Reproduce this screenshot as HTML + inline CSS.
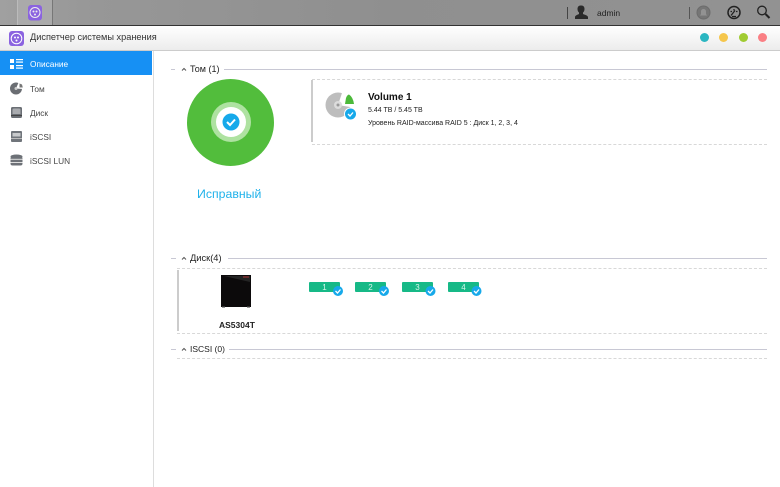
<!DOCTYPE html>
<html><head><meta charset="utf-8">
<style>
html,body{margin:0;padding:0;background:#fff}
#p{position:relative;width:780px;height:487px;overflow:hidden;background:#fff;font-family:"Liberation Sans",sans-serif;color:#222}
#p div,#p span{position:absolute;white-space:nowrap}
.nav{font-size:8.3px;left:30px;color:#444}
.ln{height:1px;background:#c8c8d4}
.sec{font-size:9px;color:#222}
.dot{height:0;border-top:1px dashed #d8d8d8}
.chip{width:31px;height:10px;background:#17b987;color:#d8f5ea;font-size:8px;line-height:11px;text-align:center;border-radius:1px}
.tb{width:9px;height:9px;border-radius:50%;top:33px}
svg{position:absolute;overflow:visible}
</style></head><body><div id="p">
<div style="left:0;top:0;width:780px;height:25px;background:linear-gradient(90deg,#a0a0a0,#979797 12%,#8f8f8f 50%,#929292)"></div>
<div style="left:17px;top:0;width:36px;height:25px;background:#aaa;border-left:1px solid #bbb;border-right:1px solid #777;box-sizing:border-box"></div>
<div style="left:0;top:25px;width:780px;height:1px;background:#333"></div>
<svg style="left:0;top:0" width="780" height="26">
<rect x="28" y="5" width="14" height="15.500" rx="3" fill="#8b63e0"/>
<circle cx="35" cy="12.500" r="5" fill="none" stroke="#eee" stroke-width="1"/><circle cx="33.500" cy="11.500" r="1" fill="#eee"/><circle cx="36.500" cy="11.500" r="1" fill="#eee"/><circle cx="35" cy="14.500" r="1" fill="#eee"/>
<rect x="567" y="7" width="1" height="12" fill="#444"/>
<path d="M575 19v-2c0-1.500 3-2.500 4-3v-1.500c-1-.8-1.500-2-1.500-3.500 0-2 1-3.500 3-3.500h1c2 0 3 1.500 3 3.500 0 1.500-.5 2.700-1.500 3.500V14c1 .5 5 1.500 5 3v2z" fill="#2a2a2a"/>
<rect x="689" y="7" width="1" height="12" fill="#555"/>
<circle cx="703.500" cy="12.500" r="6.500" fill="#767676" stroke="#6c6c6c"/>
<path d="M700 15.500h7l-1-1.500v-2.500c0-1.500-1-2.500-2.500-2.500s-2.500 1-2.500 2.500V14z" fill="#929292"/>
<circle cx="734" cy="12.500" r="6" fill="none" stroke="#222" stroke-width="1.500"/>
<path d="M731 15.500l4-5M730.500 11.500h1.500M734 9v1.500M737.500 11.500H736M732 16.500h4" stroke="#222" stroke-width="1.300" fill="none"/>
<circle cx="762" cy="10.500" r="4.300" fill="none" stroke="#222" stroke-width="1.300"/>
<path d="M765.500 14l4 4" stroke="#222" stroke-width="2"/>
</svg>
<div style="left:597px;top:8px;font-size:8.500px;color:#222">admin</div>

<div style="left:0;top:26px;width:780px;height:24px;background:linear-gradient(#fff,#ececec)"></div>
<div style="left:0;top:50px;width:780px;height:1px;background:#ccc"></div>
<svg style="left:0;top:0" width="60" height="50">
<rect x="9" y="31" width="15" height="15" rx="3" fill="#8b63e0"/>
<circle cx="16.500" cy="38.500" r="5.300" fill="none" stroke="#fff" stroke-width="1"/><circle cx="15" cy="37.500" r="1" fill="#fff"/><circle cx="18" cy="37.500" r="1" fill="#fff"/><circle cx="16.500" cy="40.500" r="1" fill="#fff"/>
</svg>
<div style="left:30px;top:32px;font-size:9.200px;color:#333">Диспетчер системы хранения</div>
<div class="tb" style="left:700px;background:#2bb6c1"></div>
<div class="tb" style="left:719px;background:#f5c64c"></div>
<div class="tb" style="left:739px;background:#a0cb32"></div>
<div class="tb" style="left:758px;background:#fa7f84"></div>

<div style="left:153px;top:51px;width:1px;height:436px;background:#ddd"></div>
<div style="left:0;top:51px;width:152px;height:24px;background:#1690f4"></div>
<div class="nav" style="top:59px;color:#fff">Описание</div>
<div class="nav" style="top:84px">Том</div>
<div class="nav" style="top:108px">Диск</div>
<div class="nav" style="top:132px">iSCSI</div>
<div class="nav" style="top:156px">iSCSI LUN</div>
<svg style="left:0;top:0" width="30" height="175">
<g fill="#fff"><rect x="10" y="59" width="4" height="4"/><rect x="10" y="65" width="4" height="4"/><rect x="16" y="59" width="7" height="1.200"/><rect x="16" y="61.500" width="7" height="1.200"/><rect x="16" y="65" width="7" height="1.200"/><rect x="16" y="67.500" width="7" height="1.200"/></g>
<circle cx="16" cy="88.500" r="6" fill="#6a6d72"/><path d="M16 88.500L19 81.500L24 84L23 89z" fill="#fff"/><circle cx="16" cy="88.500" r="1.500" fill="#ccc"/><path d="M19.500 83.500l2.500 1 .8 3h-3.300z" fill="#777"/>
<rect x="11" y="107" width="11" height="11" rx="1.500" fill="#6b6f75"/><path d="M12.500 114v-4a1.500 1.500 0 0 1 1.500-1.500h5a1.500 1.500 0 0 1 1.500 1.500v4z" fill="#a9abaf"/><rect x="11" y="115" width="11" height="1" fill="#444"/>
<rect x="11" y="131" width="11" height="11" rx="1" fill="#70757b"/><rect x="12.500" y="133" width="8" height="3.500" fill="#c8cacc"/><rect x="11" y="138" width="11" height="1" fill="#bbb"/>
<ellipse cx="16.500" cy="156.500" rx="6" ry="2" fill="#6d7177"/><rect x="10.500" y="156.500" width="12" height="9" rx="2" fill="#6d7177"/><rect x="10.500" y="158.800" width="12" height="1" fill="#ddd"/><rect x="10.500" y="162" width="12" height="1" fill="#ddd"/>
</svg>

<div class="ln" style="left:171px;top:69px;width:4px"></div>
<div class="ln" style="left:224px;top:69px;width:543px"></div>
<div class="sec" style="left:190px;top:64px">Том (1)</div>
<div class="ln" style="left:171px;top:258px;width:5px"></div>
<div class="ln" style="left:228px;top:258px;width:539px"></div>
<div class="sec" style="left:190px;top:253px;font-size:9.300px">Диск(4)</div>
<div class="ln" style="left:171px;top:349px;width:5px"></div>
<div class="ln" style="left:229px;top:349px;width:538px"></div>
<div class="sec" style="left:190px;top:344px;font-size:8.500px">ISCSI (0)</div>
<svg style="left:0;top:0" width="200" height="360" fill="none" stroke="#555" stroke-width="1">
<path d="M182 70.500l2-2 2 2M182 259.500l2-2 2 2M182 350.500l2-2 2 2"/></svg>

<svg style="left:0;top:0" width="780" height="487">
<circle cx="230.500" cy="122.500" r="43.500" fill="#52bd3c"/>
<circle cx="231" cy="122" r="20" fill="#aee2a1"/>
<circle cx="231" cy="122" r="15" fill="#fff"/>
<circle cx="231" cy="122" r="8.500" fill="#16a9ea"/>
<path d="M227 122l3 3 5-5.500" fill="none" stroke="#fff" stroke-width="2"/>
<circle cx="338" cy="105" r="12.500" fill="#bdbdbd"/>
<path d="M338 105L343 90L356 90L356 108z" fill="#fff"/>
<circle cx="338" cy="105" r="4" fill="#dcdcdc"/><circle cx="338" cy="105" r="1.500" fill="#999"/>
<path d="M345 104L346 98Q347 95 349 94.500Q353 97 354 104z" fill="#4cb93a"/>
<circle cx="350.500" cy="114" r="6" fill="#16a9ea" stroke="#fff" stroke-width="1"/>
<path d="M348 114l2 2 3-3.500" fill="none" stroke="#fff" stroke-width="1.300"/>
<rect x="221" y="275" width="30" height="32" fill="#0c0a0b"/>
<path d="M224 276l26 6v-6z" fill="#242424"/>
<rect x="243" y="276.500" width="6" height="1" fill="#a33"/>
<rect x="222" y="306" width="3" height="1.500" fill="#333"/><rect x="247" y="306" width="3" height="1.500" fill="#333"/>
</svg>
<div style="left:197px;top:187px;font-size:12.300px;color:#20b2ea">Исправный</div>

<div class="dot" style="left:312px;top:79px;width:455px"></div>
<div class="dot" style="left:312px;top:144px;width:455px"></div>
<div style="left:311px;top:80px;width:2px;height:62px;background:#ccc"></div>
<div style="left:368px;top:92px;font-size:10px;font-weight:bold;color:#111">Volume 1</div>
<div style="left:368px;top:107px;font-size:7px;color:#222">5.44 TB / 5.45 TB</div>
<div style="left:368px;top:120px;font-size:7px;color:#222">Уровень RAID-массива RAID 5 : Диск 1, 2, 3, 4</div>

<div class="dot" style="left:177px;top:268px;width:590px"></div>
<div class="dot" style="left:177px;top:333px;width:590px"></div>
<div class="dot" style="left:177px;top:358px;width:590px"></div>
<div style="left:177px;top:270px;width:2px;height:61px;background:#ccc"></div>
<div style="left:219px;top:320px;font-size:8.500px;font-weight:bold;color:#222">AS5304T</div>
<div class="chip" style="left:309px;top:282px">1</div>
<div class="chip" style="left:355px;top:282px">2</div>
<div class="chip" style="left:402px;top:282px">3</div>
<div class="chip" style="left:448px;top:282px">4</div>
<svg style="left:0;top:0" width="780" height="487">
<g fill="#16a9ea"><circle cx="338" cy="291" r="5"/><circle cx="384" cy="291" r="5"/><circle cx="430.500" cy="291" r="5"/><circle cx="476.500" cy="291" r="5"/></g>
<g fill="none" stroke="#fff" stroke-width="1.300"><path d="M335.500 291l2 2 3-3.500"/><path d="M381.500 291l2 2 3-3.500"/><path d="M428 291l2 2 3-3.500"/><path d="M474 291l2 2 3-3.500"/></g>
</svg>
</div></body></html>
